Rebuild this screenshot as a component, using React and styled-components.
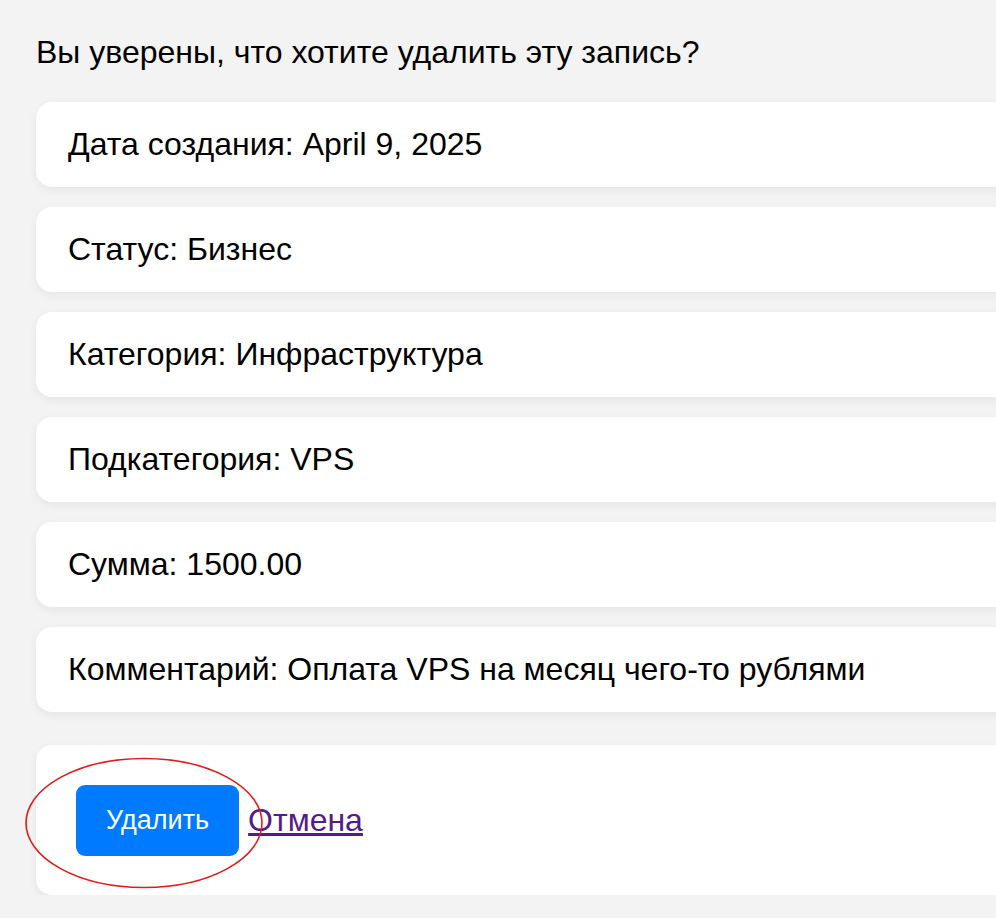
import React from 'react';
import styled, { createGlobalStyle } from 'styled-components';

const GlobalStyle = createGlobalStyle`
  html, body {
    margin: 0;
    padding: 0;
    background: #f3f3f3;
    overflow: hidden;
  }
  body {
    font-family: "Liberation Sans", Arial, sans-serif;
    color: #000;
  }
`;

const Page = styled.div`
  width: 1100px;
  padding: 32px 0 0 36px;
`;

const Question = styled.p`
  margin: 0 0 30px;
  font-size: 32px;
  line-height: 40px;
`;

const List = styled.div`
  display: flex;
  flex-direction: column;
  gap: 20px;
`;

const Card = styled.div`
  background: #fff;
  border-radius: 16px;
  box-shadow: 0 3px 10px rgba(0, 0, 0, 0.06);
  padding: 24px 32px;
  font-size: 32px;
  line-height: 37px;
`;

const FormCard = styled(Card)`
  position: relative;
  margin-top: 33px;
  padding: 40px 40px 39px;
  display: flex;
  align-items: center;
  gap: 9px;
`;

const DeleteButton = styled.button`
  font-family: "Liberation Sans", Arial, sans-serif;
  font-size: 27px;
  line-height: 31px;
  color: #fff;
  background: #007bff;
  border: none;
  border-radius: 9px;
  padding: 20px 30px;
  cursor: pointer;
`;

const CancelLink = styled.a`
  font-size: 32px;
  color: #551a8b;
  text-decoration: underline;
`;

const Mark = styled.svg`
  position: absolute;
  left: -11px;
  top: 12px;
  pointer-events: none;
`;

const rows = [
  'Дата создания: April 9, 2025',
  'Статус: Бизнес',
  'Категория: Инфраструктура',
  'Подкатегория: VPS',
  'Сумма: 1500.00',
  'Комментарий: Оплата VPS на месяц чего-то рублями',
];

export default function App() {
  return (
    <>
      <GlobalStyle />
      <Page>
        <Question>Вы уверены, что хотите удалить эту запись?</Question>
        <List>
          {rows.map((text) => (
            <Card key={text}>{text}</Card>
          ))}
        </List>
        <FormCard>
          <DeleteButton type="button">Удалить</DeleteButton>
          <CancelLink href="#">Отмена</CancelLink>
          <Mark width="240" height="134" viewBox="0 0 240 134">
            <ellipse cx="119" cy="66" rx="118" ry="64.5" fill="none" stroke="#e01b1b" strokeWidth="1.6" />
          </Mark>
        </FormCard>
      </Page>
    </>
  );
}
